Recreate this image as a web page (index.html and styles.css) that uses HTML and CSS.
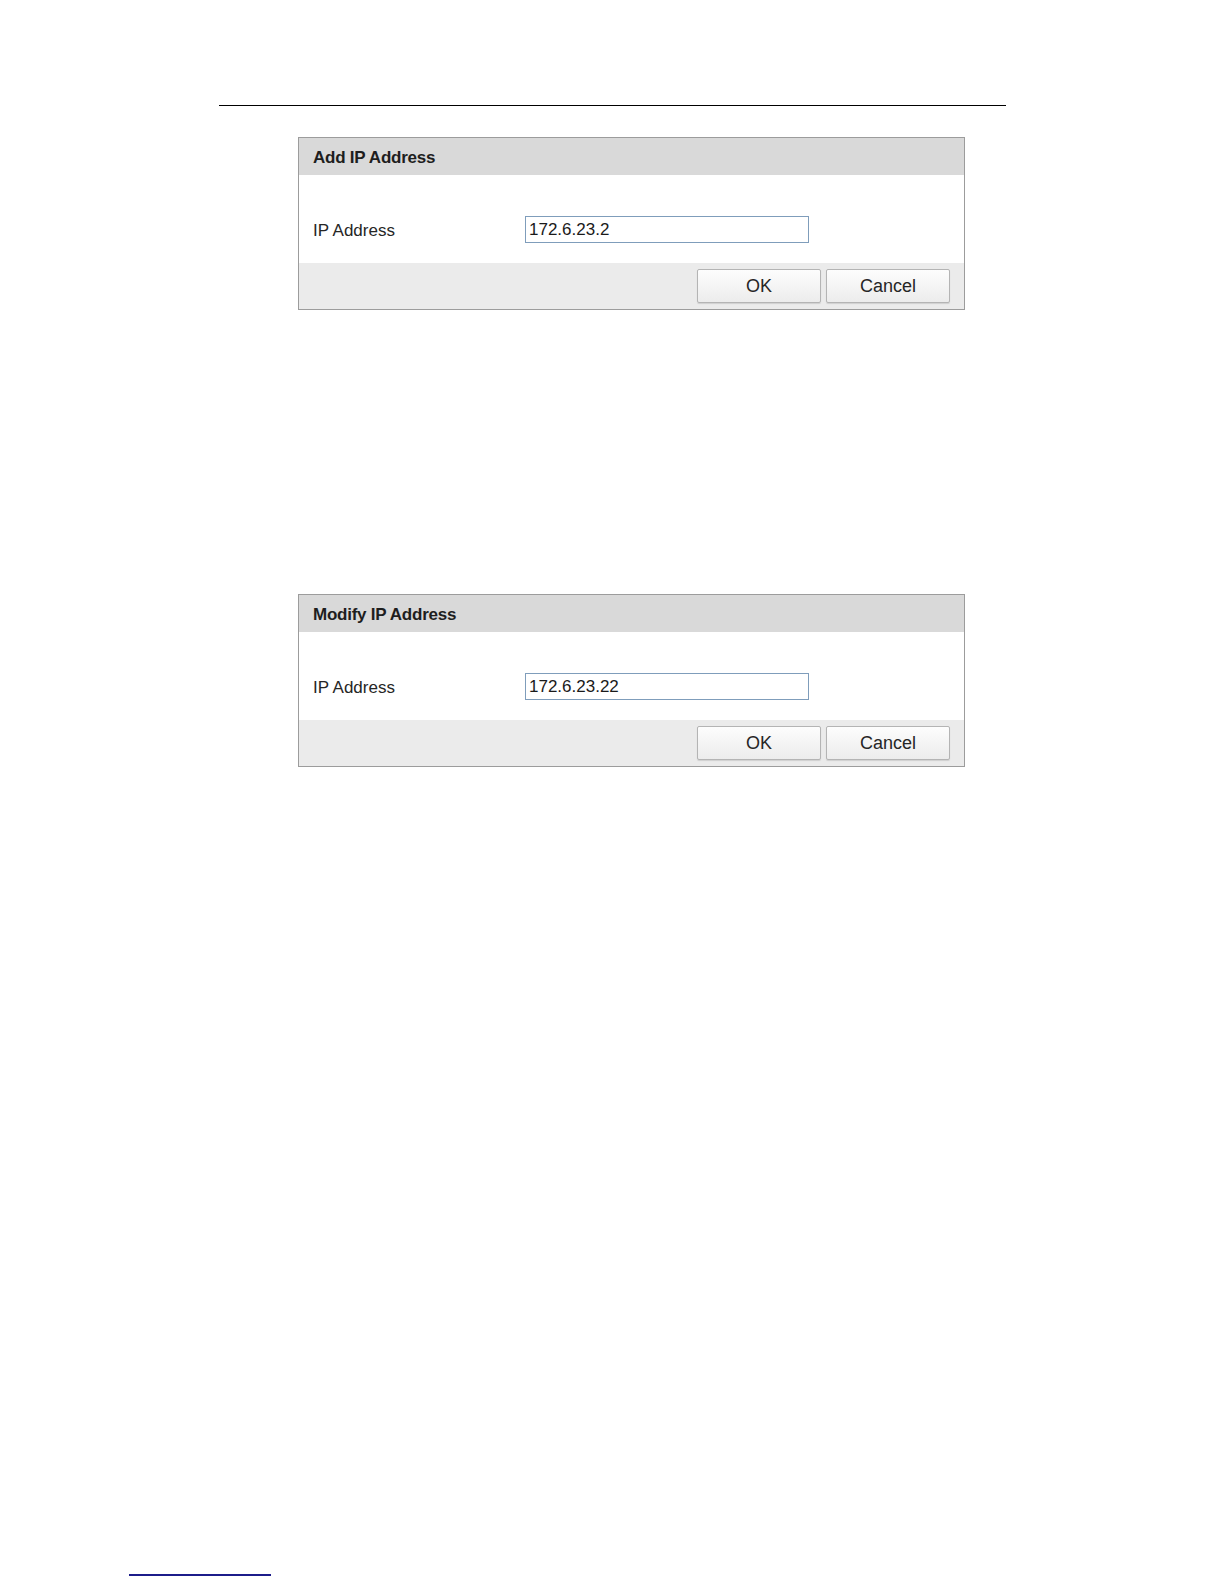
FILE: index.html
```html
<!DOCTYPE html>
<html>
<head>
<meta charset="utf-8">
<link rel="stylesheet" href="styles.css">
</head>
<body>
<div class="page">
  <div class="rule-top"></div>
  <div class="dialog dialog-first">
    <div class="dlg-head">Add IP Address</div>
    <div class="dlg-body">
      <div class="field-label">IP Address</div>
      <div class="field-input">172.6.23.2</div>
    </div>
    <div class="dlg-foot">
      <div class="btn">OK</div>
      <div class="btn">Cancel</div>
    </div>
  </div>
  <div class="dialog dialog-second">
    <div class="dlg-head">Modify IP Address</div>
    <div class="dlg-body">
      <div class="field-label">IP Address</div>
      <div class="field-input">172.6.23.22</div>
    </div>
    <div class="dlg-foot">
      <div class="btn">OK</div>
      <div class="btn">Cancel</div>
    </div>
  </div>
  <div class="spacer"></div>
  <div class="footnote-rule"></div>
</div>
</body>
</html>
```
FILE: styles.css
```css
html, body {
  margin: 0;
  padding: 0;
  background: #ffffff;
}
body {
  font-family: "Liberation Sans", Arial, sans-serif;
  color: #222222;
}
.page {
  display: flex;
  flex-direction: column;
  min-height: 1584px;
  box-sizing: border-box;
  padding-top: 105px;
  padding-bottom: 8px;
}
.rule-top {
  margin-left: 219px;
  width: 787px;
  height: 1px;
  background: #000000;
}
.dialog {
  margin-left: 298px;
  width: 667px;
  box-sizing: border-box;
  border: 1px solid #9c9c9c;
  display: flex;
  flex-direction: column;
}
.dialog-first {
  margin-top: 31px;
}
.dialog-second {
  margin-top: 284px;
}
.dlg-head {
  height: 37px;
  line-height: 40px;
  background: #d9d9d9;
  padding-left: 14px;
  font-weight: bold;
  font-size: 17px;
  letter-spacing: -0.25px;
  color: #1e1e1e;
}
.dlg-body {
  background: #ffffff;
  height: 88px;
  box-sizing: border-box;
  padding: 41px 0 0 14px;
  display: flex;
  align-items: flex-start;
}
.field-label {
  width: 212px;
  height: 27px;
  line-height: 29px;
  font-size: 17px;
  color: #262626;
}
.field-input {
  width: 284px;
  height: 27px;
  box-sizing: border-box;
  border: 1px solid #7f9dbb;
  padding-left: 3px;
  font-size: 17px;
  line-height: 25px;
  color: #1a1a1a;
  background: #ffffff;
}
.dlg-foot {
  background: #ebebeb;
  height: 46px;
  box-sizing: border-box;
  padding: 6px 14px 0 0;
  display: flex;
  justify-content: flex-end;
  gap: 5px;
}
.btn {
  width: 124px;
  height: 34px;
  box-sizing: border-box;
  border: 1px solid #b4b4b4;
  border-radius: 2px;
  background: linear-gradient(#fdfdfd, #ececec);
  box-shadow: 0 1px 1px rgba(0, 0, 0, 0.12);
  text-align: center;
  font-size: 18px;
  line-height: 32px;
  color: #262626;
}
.spacer {
  flex: 1;
}
.footnote-rule {
  margin-left: 129px;
  width: 142px;
  height: 2px;
  background: #1c1c8a;
}
```
